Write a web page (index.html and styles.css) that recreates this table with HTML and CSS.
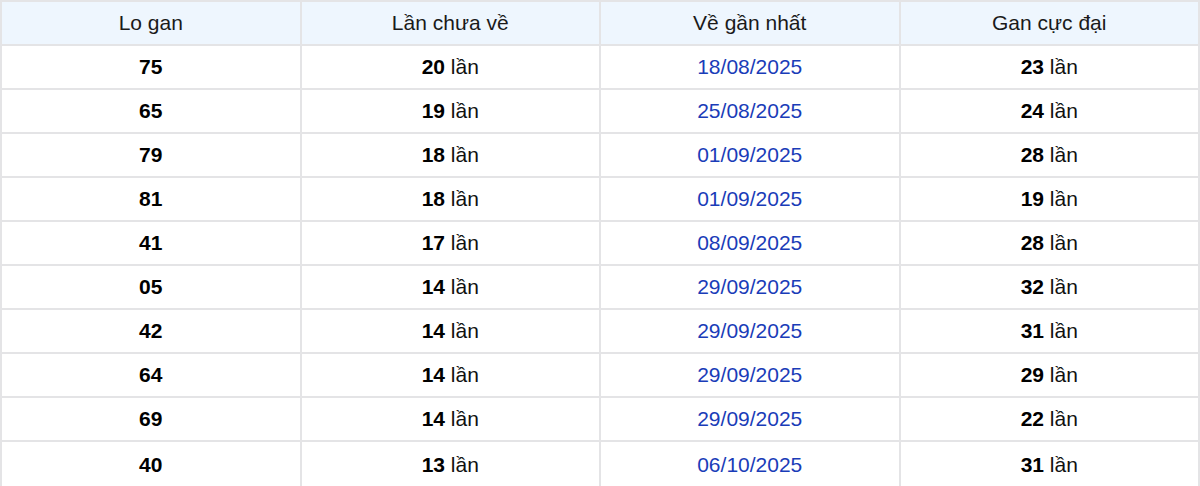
FILE: index.html
```html
<!DOCTYPE html>
<html lang="vi">
<head>
<meta charset="utf-8">
<title>Lo gan</title>
<link rel="stylesheet" href="styles.css">
</head>
<body>
<table class="gan-table">
  <thead>
    <tr><th>Lo gan</th><th>Lần chưa về</th><th>Về gần nhất</th><th>Gan cực đại</th></tr>
  </thead>
  <tbody>
    <tr><td><b>75</b></td><td><b>20</b> lần</td><td class="date">18/08/2025</td><td><b>23</b> lần</td></tr>
    <tr><td><b>65</b></td><td><b>19</b> lần</td><td class="date">25/08/2025</td><td><b>24</b> lần</td></tr>
    <tr><td><b>79</b></td><td><b>18</b> lần</td><td class="date">01/09/2025</td><td><b>28</b> lần</td></tr>
    <tr><td><b>81</b></td><td><b>18</b> lần</td><td class="date">01/09/2025</td><td><b>19</b> lần</td></tr>
    <tr><td><b>41</b></td><td><b>17</b> lần</td><td class="date">08/09/2025</td><td><b>28</b> lần</td></tr>
    <tr><td><b>05</b></td><td><b>14</b> lần</td><td class="date">29/09/2025</td><td><b>32</b> lần</td></tr>
    <tr><td><b>42</b></td><td><b>14</b> lần</td><td class="date">29/09/2025</td><td><b>31</b> lần</td></tr>
    <tr><td><b>64</b></td><td><b>14</b> lần</td><td class="date">29/09/2025</td><td><b>29</b> lần</td></tr>
    <tr><td><b>69</b></td><td><b>14</b> lần</td><td class="date">29/09/2025</td><td><b>22</b> lần</td></tr>
    <tr class="last"><td><b>40</b></td><td><b>13</b> lần</td><td class="date">06/10/2025</td><td><b>31</b> lần</td></tr>
  </tbody>
</table>
</body>
</html>
```

FILE: styles.css
```css
html, body {
  margin: 0;
  padding: 0;
  background: #ffffff;
}
body {
  font-family: "Liberation Sans", Arial, sans-serif;
  color: #111111;
}
.gan-table {
  width: 100%;
  border-collapse: collapse;
  table-layout: fixed;
  font-size: 21px;
}
.gan-table th,
.gan-table td {
  border: 2px solid #e4e4e6;
  height: 42px;
  padding: 0;
  text-align: center;
  vertical-align: middle;
}
.gan-table th {
  background: #eef6fe;
  font-weight: normal;
  color: #1a1a1a;
}
.gan-table td b {
  font-weight: bold;
  color: #000000;
}
.gan-table td.date {
  color: #1a3cb8;
}
.gan-table tr.last td {
  height: 46px;
  border-bottom-color: #ffffff;
}
```
